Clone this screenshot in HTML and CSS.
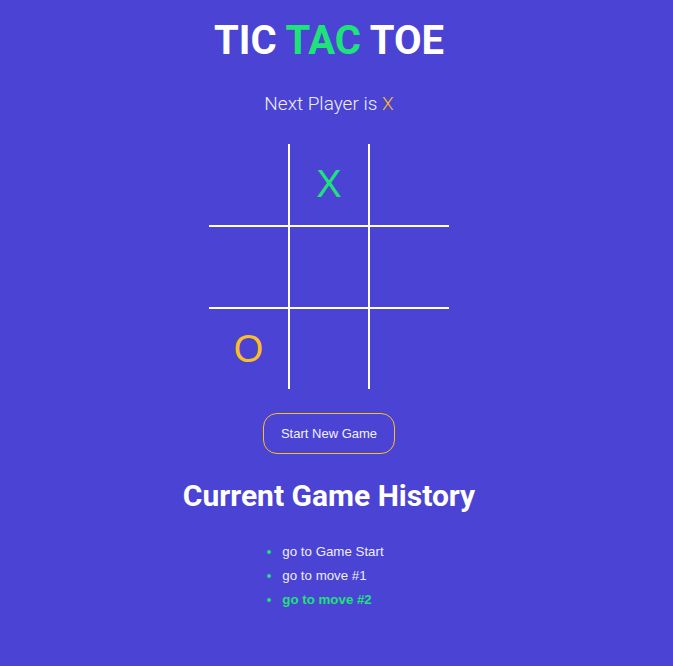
FILE: index.html
```html
<!DOCTYPE html>
<html>
<head>
<meta charset="utf-8">
<link rel="stylesheet" href="styles.css">
</head>
<body>
<main class="app">
  <h1 class="title">TIC <span class="accent">TAC</span> TOE</h1>
  <p class="status">Next Player is <span class="next">X</span></p>
  <div class="board">
    <div class="cell"></div>
    <div class="cell x">X</div>
    <div class="cell"></div>
    <div class="cell"></div>
    <div class="cell"></div>
    <div class="cell"></div>
    <div class="cell o">O</div>
    <div class="cell"></div>
    <div class="cell"></div>
  </div>
  <button class="new-game">Start New Game</button>
  <h2 class="history-title">Current Game History</h2>
  <ul class="history">
    <li>go to Game Start</li>
    <li>go to move #1</li>
    <li class="current">go to move #2</li>
  </ul>
</main>
</body>
</html>
```
FILE: styles.css
```css
html, body {
  margin: 0;
  padding: 0;
  background: #4a43d4;
  height: 100%;
}
body {
  font-family: Roboto, "Liberation Sans", sans-serif;
  color: #ffffff;
}
.app {
  display: flex;
  flex-direction: column;
  align-items: center;
  padding-top: 16px;
  padding-right: 15px;
}
.title {
  margin: 0;
  font-size: 40px;
  font-weight: 700;
  line-height: 50px;
}
.accent { color: #1ee27a; }
.status {
  margin: 26px 0 0;
  font-size: 19px;
  font-weight: 300;
  line-height: 24px;
  color: #eeeefa;
}
.next { color: #fbbf24; }
.board {
  margin-top: 28px;
  display: grid;
  grid-template-columns: 81px 80px 79px;
  grid-template-rows: 83px 82px 80px;
}
.cell {
  display: flex;
  align-items: center;
  justify-content: center;
  font-family: "Liberation Sans", Arial, sans-serif;
  font-size: 38px;
  font-weight: 400;
  box-sizing: border-box;
}
.cell:nth-child(3n+1), .cell:nth-child(3n+2) { border-right: 2px solid #ffffff; }
.cell:nth-child(-n+6) { border-bottom: 2px solid #ffffff; }
.cell.x { color: #1ee27a; }
.cell.o { color: #fbbf24; }
.new-game {
  margin-top: 24px;
  width: 132px;
  height: 41px;
  border: 1px solid #fbbf24;
  border-radius: 14px;
  background: transparent;
  color: #f2f2fc;
  font-family: "Liberation Sans", Arial, sans-serif;
  font-size: 13px;
}
.history-title {
  margin: 24px 0 0;
  font-size: 30px;
  font-weight: 700;
  line-height: 36px;
}
.history {
  margin: 26px 0 0;
  padding: 0 0 0 8px;
  font-family: "Liberation Sans", Arial, sans-serif;
  font-size: 13.3px;
  line-height: 24px;
  color: #eeeefa;
}
.history li::marker { color: #1ee27a; }
.history li.current {
  color: #1ee27a;
  font-weight: 700;
}
```
